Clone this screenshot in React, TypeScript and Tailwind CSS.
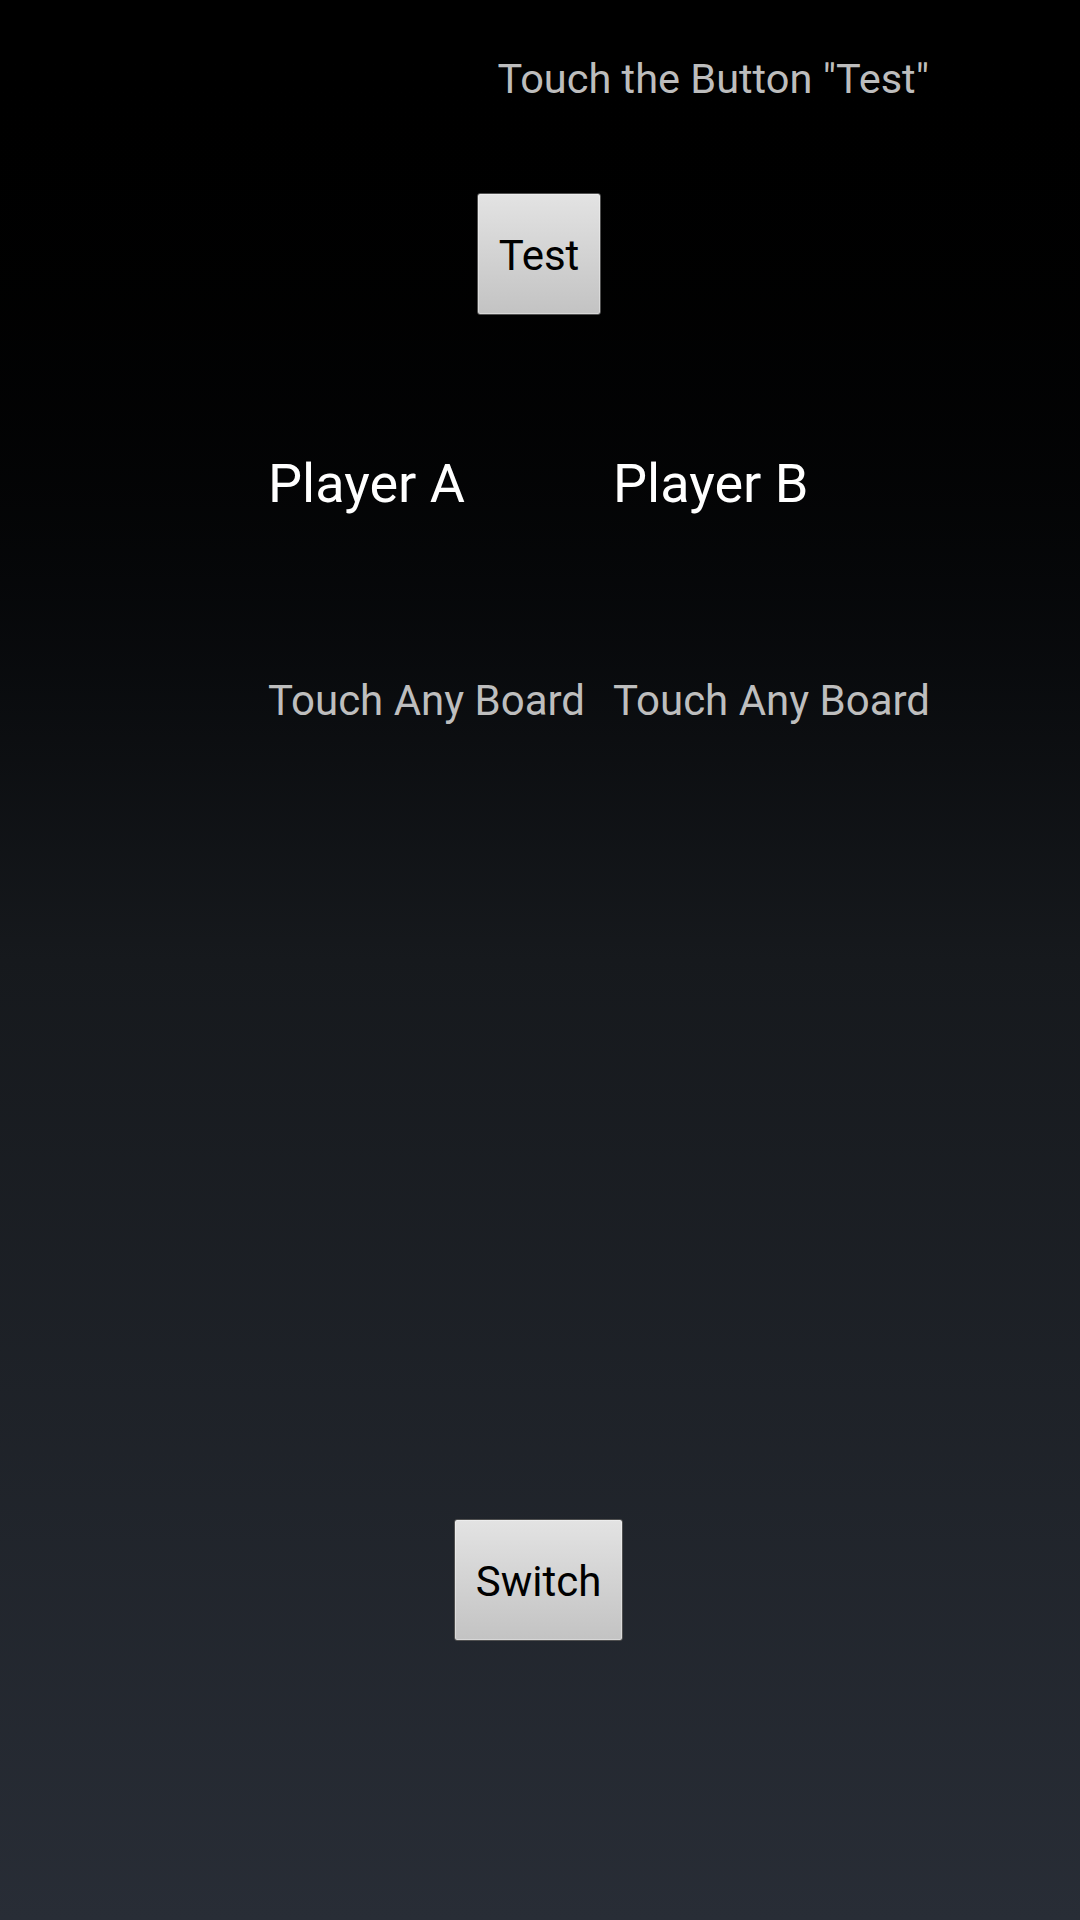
// Tela de teste dos jogadores: texto de instrucao, botao Test, duas colunas e botao Switch.

function HoloButton({ label, className }: { label: string; className: string }) {
  return (
    <button
      className={`flex items-center justify-center rounded-[3px] border border-[#505050] bg-gradient-to-b from-[#e3e3e3] to-[#c3c3c3] pt-[4px] text-[42px] leading-[50px] text-black shadow-[inset_0_0_0_1px_rgba(255,255,255,0.35)] ${className}`}
    >
      {label}
    </button>
  );
}

function PlayerColumn({ name }: { name: string }) {
  return (
    <div className="flex w-[345px] flex-col">
      <span className="text-[54px] leading-[60px] text-white">{name}</span>
      <span className="mt-[162px] text-[42px] leading-[50px] text-[#bebebe]">Touch Any Board</span>
    </div>
  );
}

export default function App() {
  return (
    <div className="flex h-[1920px] w-[1080px] flex-col bg-gradient-to-b from-[#000000] via-[#16191d] via-50% to-[#282d36] font-['Roboto',sans-serif]">
      <p className="pt-[54px] pr-[151px] text-right text-[41.5px] leading-[50px] text-[#bdbdbd]">
        Touch the Button "Test"
      </p>

      <div className="mt-[89px] flex pl-[477px]">
        <HoloButton label="Test" className="h-[122px] w-[124px]" />
      </div>

      <div className="mt-[139px] flex pl-[268px]">
        <PlayerColumn name="Player A" />
        <PlayerColumn name="Player B" />
      </div>

      <div className="mt-[793px] flex pl-[454px]">
        <HoloButton label="Switch" className="h-[122px] w-[169px]" />
      </div>
    </div>
  );
}
